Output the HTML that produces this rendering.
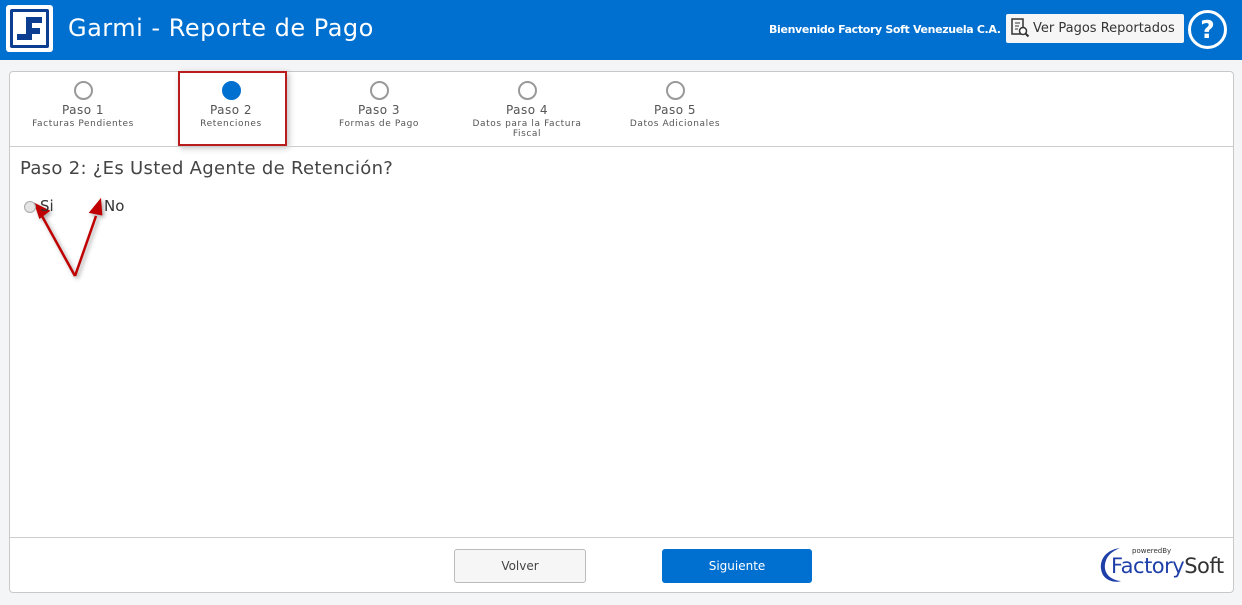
<!DOCTYPE html>
<html><head><meta charset="utf-8"><style>
*{margin:0;padding:0;box-sizing:border-box}
body{width:1242px;height:605px;background:#f4f5f7;font-family:"DejaVu Sans","Liberation Sans",sans-serif;position:relative;overflow:hidden}
.hdr{position:absolute;left:0;top:0;width:1242px;height:60px;background:#0070d0}
.abs{position:absolute}
.panel{position:absolute;left:9px;top:71px;width:1225px;height:522px;background:#fff;border:1px solid #c8c8c8;border-radius:4px}
.step{position:absolute;top:0;width:140px;text-align:center;color:#555}
.step .c{width:19px;height:19px;border:2px solid #999;border-radius:50%;margin:9px auto 0;background:#fff}
.step .t{font-size:12px;margin-top:3px;letter-spacing:.5px}
.step .s{font-size:9px;letter-spacing:.6px;line-height:10px;margin-top:2px}
</style></head><body>
<div class="hdr">
 <div class="abs" style="left:6px;top:5px;width:47px;height:47px;background:#fff;border-radius:3px"></div>
 <div class="abs" style="left:10px;top:9px;width:39px;height:39px;background:#0b3d91;border-radius:2px"></div>
 <div class="abs" style="left:13px;top:12px;width:33px;height:33px;background:#fff"></div>
 <svg class="abs" style="left:13px;top:12px" width="33" height="33"><path d="M13 5h16v6h-10v5h8v6h-8v6h-15v-6h9z" fill="#0b3d91"/></svg>
 <div class="abs" style="left:68px;top:14px;color:#fff;font-size:24px;letter-spacing:.5px">Garmi - Reporte de Pago</div>
 <div class="abs" style="left:769px;top:23px;color:#fff;font-size:11px;font-weight:bold;letter-spacing:-.35px">Bienvenido Factory Soft Venezuela C.A.</div>
 <div class="abs" style="left:1006px;top:14px;width:178px;height:29px;background:#f6f6f6;border-radius:2px"></div>
 <svg class="abs" style="left:1010px;top:18px" width="20" height="20"><rect x="2" y="1" width="11" height="15" fill="none" stroke="#333" stroke-width="1.5"/><path d="M5 5h5M5 8h4M5 11h3" stroke="#333"/><circle cx="13" cy="13" r="3.5" fill="#fff" stroke="#333" stroke-width="1.5"/><path d="M15.5 15.5l3 3" stroke="#333" stroke-width="2"/></svg>
 <div class="abs" style="left:1033px;top:21px;color:#333;font-size:13px">Ver Pagos Reportados</div>
 <div class="abs" style="left:1188px;top:10px;width:39px;height:39px;border:3px solid #fff;border-radius:50%;color:#fff;font-size:25px;font-weight:bold;text-align:center;line-height:33px">?</div>
</div>
<div class="panel">
 <div class="step" style="left:3px"><div class="c"></div><div class="t">Paso 1</div><div class="s">Facturas Pendientes</div></div>
 <div class="step" style="left:151px"><div class="c" style="background:#0070d0;border-color:#0070d0"></div><div class="t">Paso 2</div><div class="s">Retenciones</div></div>
 <div class="step" style="left:299px"><div class="c"></div><div class="t">Paso 3</div><div class="s">Formas de Pago</div></div>
 <div class="step" style="left:447px"><div class="c"></div><div class="t">Paso 4</div><div class="s">Datos para la Factura<br>Fiscal</div></div>
 <div class="step" style="left:595px"><div class="c"></div><div class="t">Paso 5</div><div class="s">Datos Adicionales</div></div>
 <div class="abs" style="left:168px;top:-1px;width:109px;height:75px;border:2px solid #b81c1c;box-shadow:2px 2px 6px rgba(0,0,0,.25)"></div>
 <div class="abs" style="left:0;top:74px;width:1223px;height:1px;background:#ccc"></div>
 <div class="abs" style="left:10px;top:86px;font-size:18px;color:#444;letter-spacing:.3px">Paso 2: ¿Es Usted Agente de Retención?</div>
 <svg class="abs" style="left:0;top:100px" width="120" height="120"><g stroke="#c00000" stroke-width="2.5" fill="#c00000" style="filter:drop-shadow(2px 2px 2px rgba(0,0,0,.35))"><path d="M65 104L32 44" fill="none"/><path d="M65 104L86 44" fill="none"/><path d="M26 33l12 6-8 6z"/><path d="M90 29l-9 11 10 2z"/></g></svg>
 <div class="abs" style="left:14px;top:129px;width:12px;height:12px;border:1px solid #aaa;border-radius:50%;background:#e4e4e4"></div>
 <div class="abs" style="left:30px;top:125px;font-size:15px;color:#333">Si</div>
 <div class="abs" style="left:94px;top:125px;font-size:15px;color:#333">No</div>
 <div class="abs" style="left:0;top:465px;width:1223px;height:1px;background:#ccc"></div>
 <div class="abs" style="left:444px;top:477px;width:132px;height:34px;border:1px solid #bbb;border-radius:3px;background:#f6f6f6;text-align:center;line-height:32px;font-size:12px;color:#444">Volver</div>
 <div class="abs" style="left:652px;top:477px;width:150px;height:34px;border-radius:3px;background:#0070d0;text-align:center;line-height:34px;font-size:12px;color:#fff">Siguiente</div>
 <svg class="abs" style="left:1086px;top:473px" width="30" height="40"><path d="M24 3C8 5 1 18 7 30c4 6 12 8 18 6C12 35 5 25 11 13c3-5 8-8 13-10z" fill="#1f3fa8"/></svg>
 <div class="abs" style="left:1122px;top:475px;font-size:7px;color:#333">poweredBy</div>
 <div class="abs" style="left:1101px;top:482px;font-size:21px;color:#1f3fa8;letter-spacing:-.5px">Factory<span style="color:#333">Soft</span></div>
</div>
</body></html>
